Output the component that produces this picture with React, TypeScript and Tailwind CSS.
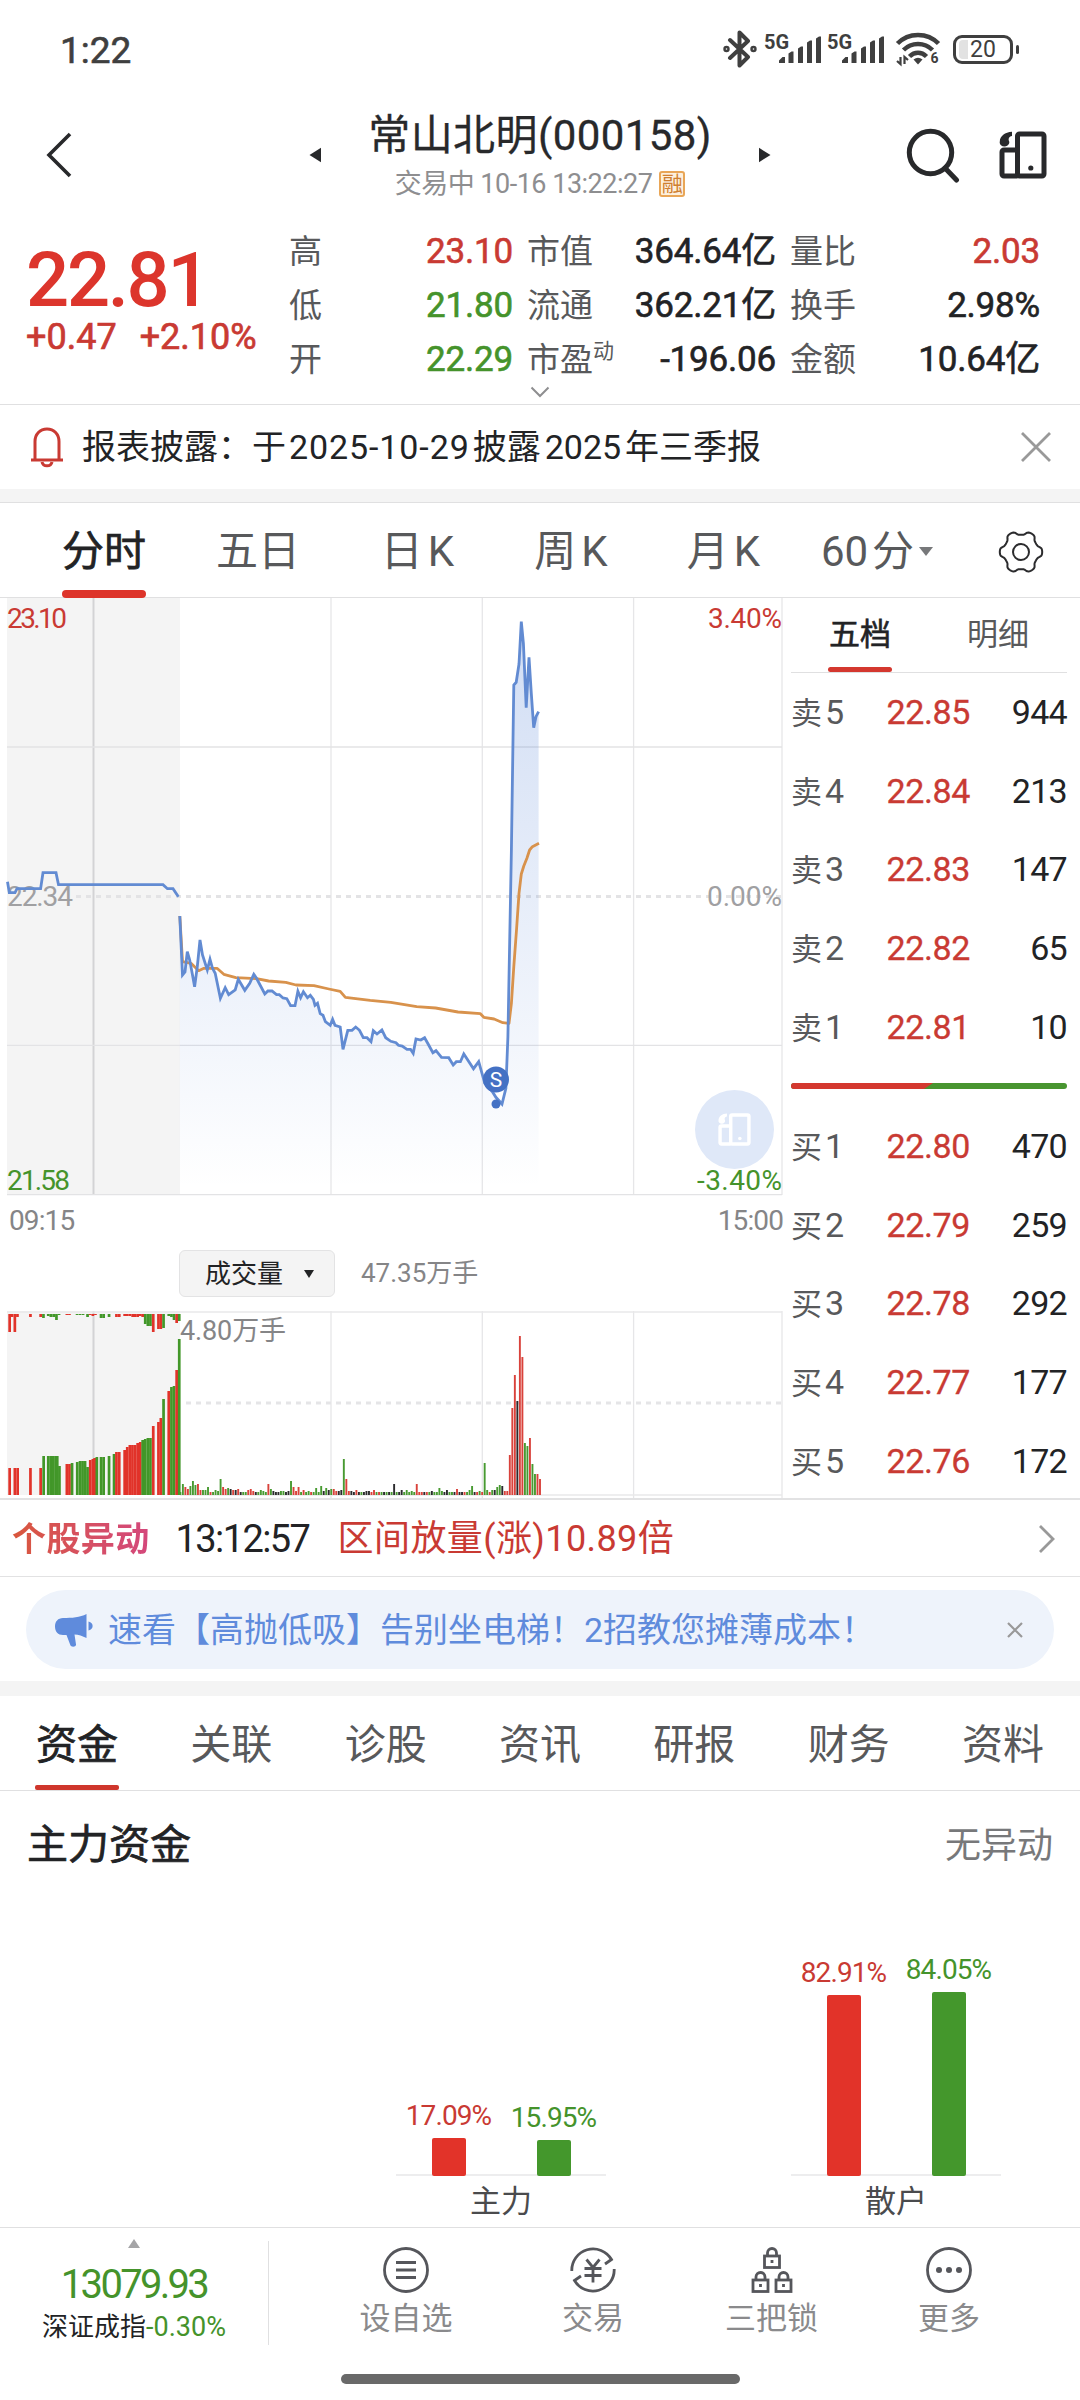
import clsx from 'clsx';

const RED = '#c93a33';
const GREEN = '#45932b';

interface Stat {
  label: string;
  sup?: string;
  value: string;
  color: string;
}

const statColumns: { box: string; items: Stat[] }[] = [
  {
    box: 'w-[224px]',
    items: [
      { label: '高', value: '23.10', color: 'text-[#c93a33]' },
      { label: '低', value: '21.80', color: 'text-[#45932b]' },
      { label: '开', value: '22.29', color: 'text-[#45932b]' },
    ],
  },
  {
    box: 'w-[249px]',
    items: [
      { label: '市值', value: '364.64亿', color: 'text-[#222325]' },
      { label: '流通', value: '362.21亿', color: 'text-[#222325]' },
      { label: '市盈', sup: '动', value: '-196.06', color: 'text-[#222325]' },
    ],
  },
  {
    box: 'w-[250px]',
    items: [
      { label: '量比', value: '2.03', color: 'text-[#c93a33]' },
      { label: '换手', value: '2.98%', color: 'text-[#222325]' },
      { label: '金额', value: '10.64亿', color: 'text-[#222325]' },
    ],
  },
];

const asks = [
  ['卖5', '22.85', '944'],
  ['卖4', '22.84', '213'],
  ['卖3', '22.83', '147'],
  ['卖2', '22.82', '65'],
  ['卖1', '22.81', '10'],
];

const bids = [
  ['买1', '22.80', '470'],
  ['买2', '22.79', '259'],
  ['买3', '22.78', '292'],
  ['买4', '22.77', '177'],
  ['买5', '22.76', '172'],
];

const infoTabs = ['资金', '关联', '诊股', '资讯', '研报', '财务', '资料'];

// pre-open auction line
const auctionLine =
  '7.5,283.7 9.3,294.7 15,294.7 17,290.7 40.6,290.7 43,274.7 56,274.7 58.5,286.7 163,286.7 167.4,290.7 173,290.7 178.4,298.7';

const priceLine =
  '179.8,318 182.5,377 185,374 187.3,353.7 189.7,362 192.5,377 194.6,388.7 197.3,368.7 200,342 202.5,357 207.3,372 210,361.3 212.5,370.3 215.2,375.3 220.4,400.3 225.2,389.7 228.7,396.7 235.2,392 238.3,381.3 244.8,392.3 249.7,385.3 253.8,376.3 256.5,380.3 264.8,396 267.9,393 272,393 276.5,396.7 279.3,396.7 283,400 286.8,400.7 290.6,407.7 295,407.7 297.9,393.3 300.6,399.7 303.4,393.7 307.5,399.7 310.3,397.3 313.4,401.3 315,407.3 317.5,405.3 320.2,415.7 323,417.3 325.4,423.7 330.2,427.3 332.6,421.3 335,427.3 340.2,429 343,451.3 347.8,432.3 352,432.3 355.7,429 359.5,432.3 363.3,439.7 367,439.7 371,443.7 373.3,432.7 377,436 381.9,432 385.7,439.7 390.8,443.3 396,444.7 398.4,447.3 402.2,448 407,451.3 410.5,451.3 413.2,455.3 416,441 420.8,442 424.6,439.7 427.7,445.3 432.9,454.7 436,452.7 441.5,459.3 448.7,459.7 453.2,467 456.3,463.7 460.4,463.7 463.8,456 473.5,470.7 478.7,463.7 484.8,485.3 492.4,493.7 495.9,499.3 502,506 505.9,490.3 507.9,438.7 511.4,252 513.8,87 516.2,84.3 519,66 521.3,23.7 523.4,45.3 526.2,109.7 529,59.3 531.3,95.3 533.7,129.7 536,118.7 538.6,113.7';

const averageLine =
  '179.8,318 182.5,363.7 191,365.3 198.7,372.7 203.9,370.3 217,370.3 223.8,376.3 235.9,379.7 256.5,380.7 268.6,383 285.8,384.3 296,387 314,387.7 328.9,391 340.2,393.3 345.4,399.3 370.2,402.3 390.8,404.3 416.7,408.7 435.6,410 458,414 480.4,415.7 483.8,419.3 494.1,421 502.8,424.7 509,425.3 511.4,405.3 513.8,368.7 516.5,332 519,295.3 521.3,276 523.8,268 526.9,260.3 529.6,252 532.4,248.7 539,245.3';

// x, height, side
const auctionBars =
  '9.6,27,r 14.8,27,r 17.6,27,r 30.4,27,r 40.6,27,r 43.6,39,g 48.2,39,g 50.7,39,g 53.2,39,g 55.6,39,g 57.2,39,g 59.4,29,g 66.8,31,r 69.4,31,r 72,32,g 77.2,33,g 80,34,g 82.5,34,g 85,34,g 87.5,28,g 90.2,35,r 92.8,36,r 94.6,37,r 96.8,38,g 101,38,g 103.6,38,g 109,39,g 114,41,g 116.4,43,r 119.2,43,r 124.6,45,r 127.2,48,r 129.8,50,r 132.4,50,r 135,50,r 137.6,52,r 140.2,53,r 142.6,55,g 145.2,56,g 147.8,57,g 150.4,57,g 153.2,69,r 158.4,73,r 160.8,77,r 163.5,96,g 168.7,104,r 171.4,108,g 174,109,g 176.6,125,r 179.2,156,g';

const auctionTopBars =
  '9.6,18,r 12,3,r 14.8,18,r 17.4,3,r 30.4,3,r 40.6,3,r 43.4,4,g 48.2,2,g 50.8,3,g 53.6,3,g 56.4,6,g 59,1,g 66.8,1,r 69.4,1,r 77,1,g 80,1,g 83,1,g 87.5,3,g 90.2,1,r 92.8,2,r 95.4,1,r 101,4,g 103.6,4,g 109,3,g 116.4,3,r 119.2,3,r 124.6,2,r 127.2,2,r 129.8,2,r 132.6,3,r 135,3,r 137.6,3,r 140.2,2,r 142.6,3,r 145.2,10,g 147.8,12,g 150.4,12,g 153.2,18,r 158.4,15,r 160.8,15,r 163.5,14,g 168.7,2,g 171.4,3,g 174,6,g 176.6,9,r 179.2,7,g';

// one token per minute: side + height
const minuteBars =
  'g3 g11 r8 r6 g9 g14 g10 r11 r5 g5 g5 g8 r3 g3 g5 g4 g16 r8 r6 g7 k6 r5 k5 r6 k3 g3 g3 r5 r6 r4 k3 g3 g5 g4 g3 r11 g6 k4 k3 k3 g4 g4 k3 k4 g14 r8 r4 r8 g3 r5 g3 g4 r3 g3 g7 g3 g9 k4 g7 k5 g6 r6 r4 k4 k5 g36 r16 r4 k4 k3 r5 k3 g3 k3 k4 k4 r3 r5 g3 r3 g3 k3 g3 k3 g3 k11 g3 k3 k5 g3 g5 g3 g4 g3 r11 r3 r3 k3 r3 g3 k4 g3 g3 g7 g4 k3 k5 g3 g3 k3 r6 k3 k3 r3 g3 g5 g9 k3 r3 g4 r3 g32 g5 r3 g5 k5 g8 g10 k9 r4 r4 r40 r87 r120 k94 r159 r138 g52 g49 r57 g31 g21 r21 r16';

const barColors: Record<string, string> = { r: '#d9423b', g: '#489a31', k: '#2b2b2d' };

const auctionColors: Record<string, string> = { r: '#e1332a', g: '#429729' };

function parseBars(data: string) {
  return data.split(' ').map((item) => {
    const [x, h, side] = item.split(',');
    return { x: Number(x), h: Number(h), side };
  });
}

function GridLines({ height }: { height: number }) {
  return (
    <g stroke="#e6e6e8" strokeWidth="1.3">
      <line x1="331" y1="0" x2="331" y2={height} />
      <line x1="482.3" y1="0" x2="482.3" y2={height} />
      <line x1="633.6" y1="0" x2="633.6" y2={height} />
      <line x1="782" y1="0" x2="782" y2={height} />
    </g>
  );
}

function DeviceIcon({ className }: { className?: string }) {
  return (
    <svg className={className} viewBox="0 0 48 48" fill="none" stroke="currentColor" strokeWidth="5" strokeLinejoin="round">
      <rect x="18.5" y="3" width="26.5" height="42" rx="2" />
      <path d="M18.5 19H5a2 2 0 0 0-2 2v22a2 2 0 0 0 2 2h13.5" />
      <circle cx="31.8" cy="37" r="2.6" fill="currentColor" stroke="none" />
      <path d="M13 .8C6 1 .8 5.500 .8 10.500a4.800 4.200 0 1 0 9-1C9 7 11 5.200 13 5z" fill="currentColor" stroke="none" />
    </svg>
  );
}

function GearIcon() {
  const points: string[] = [];
  for (let i = 0; i < 120; i++) {
    const a = (i / 120) * Math.PI * 2;
    const r = 19.2 + 2.1 * Math.tanh(1.8 * Math.cos(6 * a));
    points.push(`${(23 + r * Math.cos(a)).toFixed(2)},${(23 + r * Math.sin(a)).toFixed(2)}`);
  }
  return (
    <svg className="h-[46px] w-[46px]" viewBox="0 0 46 46" fill="none" stroke="#2b2b2d" strokeWidth="2">
      <polygon points={points.join(' ')} strokeLinejoin="round" />
      <circle cx="23" cy="23" r="8" />
    </svg>
  );
}

function SignalBars() {
  return (
    <div className="relative h-[30px] w-[57px]">
      <span className="absolute -top-[2px] left-0 text-[20px] leading-[20px] font-bold">5G</span>
      <svg className="absolute inset-0" width="57" height="30" viewBox="0 0 57 30" fill="#3f3f3f">
        <path d="M15 29v-2.500l3.500-3.500h2.500v6zM24.500 29V19.500l3-2h2V29zM34 29V14.500l3-2h2V29zM43 29V8.500l3-2h2V29zM52 29V4.500l3-2h2V29z" />
      </svg>
    </div>
  );
}

function StatusBar() {
  return (
    <div className="flex h-[98px] items-center pl-[60px] text-[#3f3f3f]">
      <div className="w-[663px] pt-[3px] text-[37px] leading-none [-webkit-text-stroke:0.6px]">1:22</div>
      <svg width="34" height="38" viewBox="0 0 34 38" fill="none" stroke="#3f3f3f" strokeWidth="4" strokeLinejoin="round" strokeLinecap="round">
        <path d="M7 10l18 17-8.500 8.500V2.500L25 11 7 28" />
        <circle cx="3.500" cy="19" r="1.200" />
        <circle cx="30.500" cy="19" r="1.200" />
      </svg>
      <div className="ml-[7px] flex gap-[6px]">
        <SignalBars />
        <SignalBars />
      </div>
      <svg className="ml-[11px]" width="46" height="36" viewBox="0 0 46 36" fill="none" stroke="#3f3f3f">
        <path d="M2.500 12.500C13.500 1 32.500 1 43.500 12.500" strokeWidth="4.500" />
        <path d="M8.500 19c8-8 21-8 29 0" strokeWidth="4.500" />
        <path d="M14.500 25.500c5-5 12-5 17 0" strokeWidth="4.500" />
        <path d="M18.500 28.500q4.500-3.500 9 0L23 33.500z" fill="#3f3f3f" stroke="none" />
        <path d="M5.500 26v7l-3.500-3M9.500 33v-7l3.500 3" strokeWidth="2.200" />
        <text x="35.500" y="32" fontSize="14" fontWeight="700" fill="#3f3f3f" stroke="none">6</text>
      </svg>
      <div className="ml-[12px] flex items-center">
        <div className="relative flex h-[29px] w-[60px] items-center justify-center rounded-[9px] border-[3px] border-[#3f3f3f] text-[23px] leading-none">
          <div className="absolute top-[2px] left-[3px] h-[19px] w-[9px] rounded-l-[4px] bg-[#e2e2e2]" />
          <span className="relative">20</span>
        </div>
        <div className="ml-[3px] h-[9px] w-[3px] rounded-full bg-[#3f3f3f]" />
      </div>
    </div>
  );
}

function Header() {
  return (
    <div className="flex h-[114px] items-center pl-[46px] text-[#28292b]">
      <svg width="26" height="46" viewBox="0 0 26 46" fill="none" stroke="currentColor" strokeWidth="3.600">
        <path d="M24 2L3 23l21 21" />
      </svg>
      <svg className="ml-[237px]" width="12" height="16" viewBox="0 0 12 16" fill="currentColor">
        <path d="M12 .8v14.400L.5 8z" />
      </svg>
      <div className="flex w-[438px] flex-col items-center">
        <div className="mt-[3px] text-[42px] leading-[50px] tracking-[0.4px] [-webkit-text-stroke:0.3px]">常山北明(000158)</div>
        <div className="mt-[5px] flex h-[36px] items-center text-[27px] leading-[36px] text-[#8e8e90]">
          <span className="tracking-[-0.5px]">交易中 10-16 13:22:27</span>
          <span className="ml-[7px] flex h-[26px] w-[26px] items-center justify-center rounded-[3px] border-2 border-[#e9a657] bg-[#fdf0dd] text-[21px] leading-none text-[#cf7f30]">
            融
          </span>
        </div>
      </div>
      <svg width="12" height="16" viewBox="0 0 12 16" fill="currentColor">
        <path d="M0 .8v14.400L11.500 8z" />
      </svg>
      <svg className="ml-[135px]" width="55" height="56" viewBox="0 0 55 56" fill="none" stroke="currentColor" strokeWidth="5">
        <circle cx="24.500" cy="25.500" r="21.200" />
        <path d="M39 41l11.500 12" strokeLinecap="round" />
      </svg>
      <DeviceIcon className="ml-[38px] h-[48px] w-[48px]" />
    </div>
  );
}

function QuotePanel() {
  return (
    <div className="h-[193px] border-b border-[#e0e0e1]">
      <div className="flex h-[172px] pl-[26px]">
        <div className="w-[263px]">
          <div className="mt-[24px] text-[76px] leading-[88px] font-medium tracking-[-2.3px] text-[#dc352c]">22.81</div>
          <div className="-mt-[8px] flex gap-[23px] text-[36px] leading-[42px] text-[#c93a33] [-webkit-text-stroke:0.7px]">
            <span>+0.47</span>
            <span>+2.10%</span>
          </div>
        </div>
        <div className="flex gap-[14px] pt-[13px]">
          {statColumns.map((column) => (
            <div key={column.box} className={clsx('flex flex-col', column.box)}>
              {column.items.map((item) => (
                <div key={item.label} className="flex h-[54px] items-center justify-between">
                  <div className="flex text-[33px] leading-[54px] text-[#58595b]">
                    {item.label}
                    {item.sup && <span className="-mt-[9px] text-[21px]">{item.sup}</span>}
                  </div>
                  <div className={clsx('text-[35px] leading-[54px] tracking-[-0.2px] [-webkit-text-stroke:0.6px]', item.color)}>{item.value}</div>
                </div>
              ))}
            </div>
          ))}
        </div>
      </div>
      <svg className="mx-auto" width="20" height="14" viewBox="0 0 20 14" fill="none" stroke="#8e8e90" strokeWidth="2">
        <path d="M1.500 3.500L10 12l8.500-8.500" />
      </svg>
    </div>
  );
}

function Notice() {
  return (
    <div className="flex h-[84px] items-center pl-[30px] text-[34px] text-[#222325]">
      <svg width="34" height="42" viewBox="0 0 34 42" fill="none" stroke="#c93a33" strokeWidth="3">
        <path d="M5 34V15.500C5 8 10 3 17 3s12 5 12 12.500V34M1 34h32" />
        <path d="M12 36c1 5 9 5 10 0" />
      </svg>
      <div className="ml-[18px] w-[939px] leading-none">
        报表披露：于<span className="mx-[3px] tracking-[0.9px]">2025-10-29</span>披露<span className="mx-[4px]">2025</span>年三季报
      </div>
      <svg width="30" height="30" viewBox="0 0 30 30" stroke="#999" strokeWidth="2.800">
        <path d="M1 1l28 28M29 1L1 29" />
      </svg>
    </div>
  );
}

function PeriodTabs() {
  return (
    <div className="grid h-[95px] grid-cols-[178px_160px_159px_148px_157px_150px_128px] border-b border-[#e0e0e1] text-[42px] leading-[97px] text-[#58595b]">
      <div className="flex flex-col items-center pl-[30px] text-[#222325] [-webkit-text-stroke:0.7px]">
        <span className="h-[87px]">分时</span>
        <div className="h-[8px] w-[84px] shrink-0 rounded-full bg-[#dd342a]" />
      </div>
      <div className="text-center">五日</div>
      <div className="text-center">日<span className="ml-[5px]">K</span></div>
      <div className="text-center">周<span className="ml-[5px]">K</span></div>
      <div className="text-center">月<span className="ml-[5px]">K</span></div>
      <div className="flex items-center justify-center">
        60<span className="ml-[4px]">分</span>
        <svg className="ml-[5px]" width="14" height="9" viewBox="0 0 14 9" fill="#77787a">
          <path d="M0 0h14L7 9z" />
        </svg>
      </div>
      <div className="flex items-center pl-[46px]">
        <GearIcon />
      </div>
    </div>
  );
}

function PriceChart() {
  return (
    <div className="relative h-[598px]">
      <svg width="783" height="598" viewBox="0 0 783 598" fill="none" fontSize="28">
        <defs>
          <linearGradient id="area" x1="0" y1="24" x2="0" y2="590" gradientUnits="userSpaceOnUse">
            <stop offset="0" stopColor="#5b87d8" stopOpacity="0.28" />
            <stop offset="0.7" stopColor="#5b87d8" stopOpacity="0.09" />
            <stop offset="1" stopColor="#5b87d8" stopOpacity="0" />
          </linearGradient>
        </defs>
        <rect x="7" y="0" width="173" height="597" fill="#f4f4f4" />
        <line x1="93.500" y1="0" x2="93.500" y2="597" stroke="#d3d3d5" strokeWidth="2" />
        <GridLines height={597} />
        <g stroke="#e3e3e5" strokeWidth="1.300">
          <line x1="7" y1="149" x2="782" y2="149" />
          <line x1="7" y1="447.300" x2="782" y2="447.300" />
          <line x1="7" y1="596.700" x2="782" y2="596.700" />
        </g>
        <line x1="76" y1="298.500" x2="782" y2="298.500" stroke="#e3e3e5" strokeWidth="3" strokeDasharray="5 5" />
        <polygon points={`179.8,597 ${priceLine} 538.6,597`} fill="url(#area)" />
        <polyline points={averageLine} stroke="#d8924c" strokeWidth="2.800" strokeLinejoin="round" />
        <text x="7" y="308" fill="#a0a0a2" textLength="66">22.34</text>
        <text x="707" y="308" fill="#a0a0a2" textLength="75">0.00%</text>
        <polyline points={auctionLine} stroke="#628bd2" strokeWidth="2.800" />
        <polyline points={priceLine} stroke="#628bd2" strokeWidth="2.800" />
        <circle cx="496" cy="506" r="4.500" fill="#4471c4" />
        <circle cx="496" cy="481.500" r="13" fill="#4471c4" />
        <text x="496" y="489" fill="#fff" fontSize="21" textAnchor="middle">S</text>
        <text x="7" y="30" fill={RED} textLength="60">23.10</text>
        <text x="708" y="30" fill={RED} textLength="74">3.40%</text>
        <text x="7" y="592" fill={GREEN} textLength="63">21.58</text>
        <text x="697" y="592" fill={GREEN} textLength="85">-3.40%</text>
      </svg>
      <div className="absolute top-[492px] left-[695px] flex h-[79px] w-[79px] items-center justify-center rounded-full bg-[#dfe8f8] text-white">
        <DeviceIcon className="h-[33px] w-[33px]" />
      </div>
    </div>
  );
}

function VolumeChart() {
  return (
    <svg width="783" height="188" viewBox="0 0 783 188" fill="none">
      <rect x="7" y="0" width="173" height="184" fill="#f4f4f4" />
      <line x1="93.500" y1="0" x2="93.500" y2="184" stroke="#d3d3d5" strokeWidth="2" />
      <GridLines height={187} />
      <g stroke="#e8e8ea" strokeWidth="1.500">
        <line x1="7" y1="1" x2="782" y2="1" />
        <line x1="180" y1="184" x2="782" y2="184" />
      </g>
      <line x1="186" y1="92" x2="782" y2="92" stroke="#e5e5e7" strokeWidth="2.800" strokeDasharray="5 5" />
      {parseBars(auctionTopBars).map((bar) => (
        <rect key={bar.x} x={bar.x - 1.3} y="3" width="2.7" height={bar.h} fill={auctionColors[bar.side]} />
      ))}
      {parseBars(auctionBars).map((bar) => (
        <rect key={bar.x} x={bar.x - 1.3} y={184 - bar.h} width="2.7" height={bar.h} fill={auctionColors[bar.side]} />
      ))}
      {minuteBars.split(' ').map((token, i) => {
        const h = Number(token.slice(1));
        return <rect key={i} x={179.4 + i * 2.515} y={184 - h} width="1.9" height={h} fill={barColors[token[0]]} />;
      })}
      <text x="180" y="29" fontSize="27" fill="#858587" textLength="106">4.80万手</text>
    </svg>
  );
}

function ChartColumn() {
  return (
    <div className="w-[783px]">
      <PriceChart />
      <div className="flex h-[50px] items-center justify-between pl-[9px] text-[28px] leading-none tracking-[-0.900px] text-[#858587]">
        <span>09:15</span>
        <span>15:00</span>
      </div>
      <div className="flex h-[65px] items-start pt-[4px] pl-[179px]">
        <div className="flex h-[47px] w-[156px] items-center justify-between rounded-[6px] border border-[#e3e3e4] bg-[#f4f4f4] pr-[20px] pl-[25px] text-[26px] leading-none text-[#222325]">
          成交量
          <svg width="10" height="8" viewBox="0 0 10 8" fill="currentColor">
            <path d="M0 0h10L5 8z" />
          </svg>
        </div>
        <span className="ml-[26px] text-[26px] leading-[46px] text-[#858587]">47.35万手</span>
      </div>
      <VolumeChart />
    </div>
  );
}

function BookRow({ row }: { row: string[] }) {
  return (
    <div className="flex h-[78.600px] items-center text-[34px] leading-none">
      <div className="w-[62px] text-[#58595b]">
        <span className="text-[31px]">{row[0][0]}</span>
        <span className="ml-[3px] tracking-[-0.5px]">{row[0][1]}</span>
      </div>
      <div className="w-[117px] text-right tracking-[-0.400px] text-[#c93a33] [-webkit-text-stroke:0.3px]">{row[1]}</div>
      <div className="w-[97px] text-right tracking-[-0.700px] text-[#222325]">{row[2]}</div>
    </div>
  );
}

function OrderBook() {
  return (
    <div className="w-[276px]">
      <div className="flex h-[75px] border-b border-[#e0e0e1] text-[31px] leading-[74px]">
        <div className="flex w-1/2 flex-col items-center text-[#222325] [-webkit-text-stroke:0.6px]">
          <span className="h-[69px]">五档</span>
          <div className="h-[5px] w-[64px] shrink-0 rounded-full bg-[#d4382f]" />
        </div>
        <div className="w-1/2 text-center text-[#58595b]">明细</div>
      </div>
      {asks.map((row) => (
        <BookRow key={row[0]} row={row} />
      ))}
      <svg className="mt-[17px] mb-[18px]" width="276" height="6" viewBox="0 0 276 6">
        <rect width="276" height="6" rx="3" fill="#489530" />
        <path d="M3 0H142l-9 6H3a3 3 0 0 1 0-6z" fill="#d4382f" />
      </svg>
      {bids.map((row) => (
        <BookRow key={row[0]} row={row} />
      ))}
    </div>
  );
}

function AlertRow() {
  return (
    <div className="flex h-[79px] items-center border-t-2 border-b border-[#e2e2e3] pt-[2px] pl-[12px] leading-none">
      <span className="bg-gradient-to-r from-[#d9573b] to-[#d4477c] bg-clip-text text-[34px] leading-[44px] font-bold tracking-[0.400px] text-transparent">个股异动</span>
      <span className="ml-[26px] w-[137px] text-[38px] tracking-[-1.600px] text-[#222325]">13:12:57</span>
      <span className="ml-[25px] w-[700px] text-[36px] tracking-[0.400px] text-[#c93a33]">区间放量(涨)10.89倍</span>
      <svg width="18" height="30" viewBox="0 0 18 30" fill="none" stroke="#999" strokeWidth="2.800">
        <path d="M2 2l13 13L2 28" />
      </svg>
    </div>
  );
}

function Banner() {
  return (
    <div className="h-[104px] px-[26px] pt-[13px]">
      <div className="flex h-[79px] items-center rounded-full bg-[#eef3fb] pl-[28px] text-[34px] leading-none text-[#5f8bdc]">
        <svg width="40" height="34" viewBox="0 0 40 34" fill="currentColor">
          <path d="M32.500 1v24c-4-2-8-3.300-12-3.500l1.500 10c.3 2.500-5 3-5.700.5L12.500 22H9C4 22 1 18.500 1 13.500S4 5 9 5c9 0 17-.5 23.500-4z" />
          <path d="M34.500 8.500c5.500 1 5.500 8 0 9z" />
        </svg>
        <span className="ml-[14px] w-[899px]">速看【高抛低吸】告别坐电梯！2招教您摊薄成本！</span>
        <svg width="16" height="16" viewBox="0 0 16 16" stroke="#999" strokeWidth="2.200">
          <path d="M1 1l14 14M15 1L1 15" />
        </svg>
      </div>
    </div>
  );
}

function InfoTabs() {
  return (
    <div className="flex h-[95px] justify-between border-b border-[#e0e0e1] px-[35px] text-[41px] leading-[98px] text-[#58595b]">
      {infoTabs.map((tab, i) => (
        <div key={tab} className={clsx('flex w-[84px] flex-col items-center', i === 0 && 'text-[#222325] [-webkit-text-stroke:0.7px]')}>
          <span className="h-[89px]">{tab}</span>
          {i === 0 && <div className="h-[5px] w-full shrink-0 rounded-[2px] bg-[#cf362c]" />}
        </div>
      ))}
    </div>
  );
}

interface FlowBar {
  label: string;
  height: number;
}

function FlowGroup({ name, inflow, outflow }: { name: string; inflow: FlowBar; outflow: FlowBar }) {
  return (
    <div className="w-[210px]">
      <div className="flex h-[202px] items-end justify-center gap-[7px] border-b-2 border-[#ededee] text-[28px] leading-[30px] tracking-[-0.900px]">
        <div className="-mb-[2px] flex w-[98px] flex-col items-center text-[#c93a33]">
          {inflow.label}
          <div className="mt-[7px] w-[34px] rounded-[2px] bg-[#e23329]" style={{ height: inflow.height }} />
        </div>
        <div className="-mb-[2px] flex w-[98px] flex-col items-center text-[#45932b]">
          {outflow.label}
          <div className="mt-[7px] w-[34px] rounded-[2px] bg-[#44972c]" style={{ height: outflow.height }} />
        </div>
      </div>
      <div className="mt-[4px] text-center text-[31px] leading-[44px] text-[#4a4b4d]">{name}</div>
    </div>
  );
}

function FundSection() {
  return (
    <div className="h-[436px]">
      <div className="flex h-[106px] items-center justify-between pt-[4px] pr-[27px] pl-[27px]">
        <span className="text-[41px] text-[#222325] [-webkit-text-stroke:0.7px]">主力资金</span>
        <span className="text-[36px] text-[#77787a]">无异动</span>
      </div>
      <div className="flex gap-[185px] pt-[77px] pl-[396px]">
        <FlowGroup name="主力" inflow={{ label: '17.09%', height: 38 }} outflow={{ label: '15.95%', height: 36 }} />
        <FlowGroup name="散户" inflow={{ label: '82.91%', height: 181 }} outflow={{ label: '84.05%', height: 184 }} />
      </div>
    </div>
  );
}

function Lock({ x, y }: { x: number; y: number }) {
  return (
    <g transform={`translate(${x} ${y})`}>
      <rect x="1.500" y="8.500" width="15" height="11.500" />
      <path d="M4.500 8.500V5.500a4.500 4.500 0 0 1 9 0v3M9 12.500v3" />
    </g>
  );
}

const navItems = [
  {
    label: '设自选',
    box: 'w-[186px]',
    icon: (
      <>
        <circle cx="24" cy="24" r="21.500" />
        <path d="M14 16.500h20M14 24h20M14 31.500h20" />
      </>
    ),
  },
  {
    label: '交易',
    box: 'w-[188px]',
    icon: (
      <>
        <path d="M2.800 25A21.300 21.300 0 0 1 42.500 13.500L36 18M45.200 23A21.300 21.300 0 0 1 5.500 34.500L12 30" />
        <path d="M17.500 13.500L24 21.500l6.500-8M24 21.500v15M15.500 22.500h17M15.500 29.500h17" />
      </>
    ),
  },
  {
    label: '三把锁',
    box: 'w-[169px]',
    icon: (
      <>
        <Lock x={15} y={1.5} />
        <Lock x={3.5} y={25.5} />
        <Lock x={26.5} y={25.5} />
      </>
    ),
  },
  {
    label: '更多',
    box: 'w-[186px]',
    icon: (
      <>
        <circle cx="24" cy="24" r="21.500" />
        <g fill="#55565b" stroke="none">
          <circle cx="14" cy="24" r="3" />
          <circle cx="24" cy="24" r="3" />
          <circle cx="34" cy="24" r="3" />
        </g>
      </>
    ),
  },
];

function BottomBar() {
  return (
    <div className="h-[173px] border-t border-[#e0e0e1]">
      <div className="flex h-[146px]">
        <div className="mt-[13px] flex h-[104px] w-[269px] flex-col items-center border-r border-[#e0e0e1]">
          <svg className="-mt-[2px] shrink-0" width="12" height="9" viewBox="0 0 12 9" fill="#a5a5a7">
            <path d="M6 0l6 9H0z" />
          </svg>
          <div className="mt-[14px] shrink-0 text-[40px] leading-[46px] tracking-[-2.700px] text-[#45932b]">13079.93</div>
          <div className="mt-px shrink-0 text-[26px] leading-[36px] text-[#222325]">
            深证成指<span className="text-[27px] text-[#45932b]">-0.30%</span>
          </div>
        </div>
        <div className="flex pt-[18px] pl-[44px]">
          {navItems.map((item) => (
            <div key={item.label} className={clsx('flex flex-col items-center', item.box)}>
              <svg width="48" height="48" viewBox="0 0 48 48" fill="none" stroke="#55565b" strokeWidth="2.800">
                {item.icon}
              </svg>
              <span className="mt-[3px] text-[31px] leading-[44px] text-[#8a8a8c]">{item.label}</span>
            </div>
          ))}
        </div>
      </div>
      <div className="mx-auto h-[10px] w-[399px] rounded-full bg-[#696969]" />
    </div>
  );
}

export default function App() {
  return (
    <div className="h-[2400px] w-[1080px] overflow-hidden bg-white font-[Roboto,'Noto_Sans_CJK_SC',sans-serif]">
      <StatusBar />
      <Header />
      <QuotePanel />
      <Notice />
      <div className="h-[14px] border-b border-[#e0e0e1] bg-[#f4f4f4]" />
      <PeriodTabs />
      <div className="flex h-[900px] gap-[8px]">
        <ChartColumn />
        <OrderBook />
      </div>
      <AlertRow />
      <Banner />
      <div className="h-[15px] bg-[#f4f4f4]" />
      <InfoTabs />
      <FundSection />
      <BottomBar />
    </div>
  );
}
